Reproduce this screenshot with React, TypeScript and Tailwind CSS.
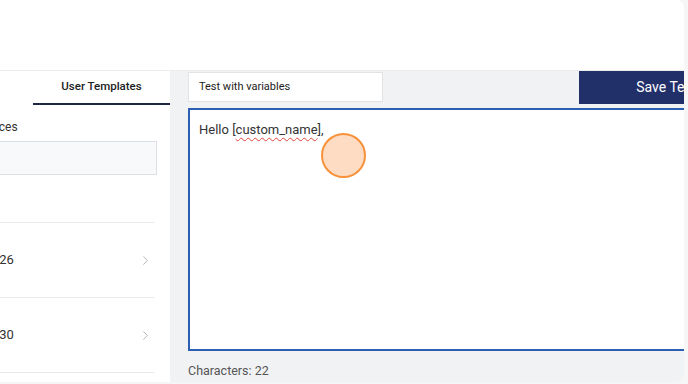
import React from 'react';
import { ChevronRight } from 'lucide-react';

const items = [
  { title: 'Template 05/26', sub: 'Hi there' },
  { title: 'Template 05/30', sub: 'Hi there' },
];

export default function App() {
  return (
    <div className="w-[688px] h-[384px] bg-[#f6f6f6] overflow-hidden font-['Roboto',sans-serif] text-[#333]">
      <div className="w-[684px] h-[382px] bg-white rounded-r-lg overflow-hidden flex flex-col relative">
        {/* Header */}
        <header className="h-[71px] shrink-0 bg-white border-b border-[#ececec]" />

        {/* Body */}
        <div className="flex flex-1 min-h-0 -ml-[102px]">
          {/* Left panel */}
          <aside className="w-[272px] shrink-0 bg-white flex flex-col">
            <div className="flex h-[34px]">
              <button className="w-[135px] text-[11.5px] text-[#555]">System</button>
              <button className="w-[137px] text-[11.5px] font-medium text-[#222] border-b-2 border-[#1d2746]">
                User Templates
              </button>
            </div>
            <div className="pl-4 pr-[13px] pt-[14px]">
              <p className="pl-[5px] text-[12px] text-[#333] leading-[16px]">Search Sequences</p>
              <input
                className="mt-[6px] w-full h-[34px] bg-[#f8f9fa] border border-[#dcdfe3] outline-none px-3"
                readOnly
              />
            </div>
            <ul className="mt-[47px] pl-4 pr-4">
              {items.map((it) => (
                <li key={it.title} className="h-[75px] border-t border-[#e9e9e9] pt-[28px]">
                  <div className="flex items-center justify-between">
                    <p className="pl-[8px] text-[13px] leading-[18px] text-[#333]">{it.title}</p>
                    <ChevronRight size={15} strokeWidth={1.2} className="text-[#9a9a9a] mr-[1px]" />
                  </div>
                  <p className="text-[10px] leading-[12px] text-[#888]">{it.sub}</p>
                </li>
              ))}
              <li className="border-t border-[#e9e9e9]" />
            </ul>
          </aside>

          {/* Right area */}
          <main className="w-[633px] shrink-0 bg-[#f1f2f4] px-[18px] flex flex-col">
            <div className="flex items-start justify-between h-[37px]">
              <div className="mt-[1px] w-[195px] h-[30px] bg-white border border-[#e2e3e5] flex items-center px-[10px] text-[11px] text-[#222]">
                Test with variables
              </div>
              <button className="w-[206px] h-[33px] bg-[#22306a] text-white text-[14px]">Save Template</button>
            </div>
            <div className="h-[243px] bg-white border-2 border-[#2c5fb3] px-[9px] pt-[10px] text-[13px] text-[#333]">
              Hello [<span className="underline decoration-wavy decoration-[#e0453a] decoration-1 underline-offset-[3px]">custom_name</span>],
            </div>
            <p className="mt-[11px] text-[12.5px] text-[#555]">Characters: 22</p>
          </main>
        </div>

        {/* click indicator */}
        <div className="absolute left-[321px] top-[133px] w-[45px] h-[45px] rounded-full bg-[#fedcc3] border-2 border-[#f7923a]" />
      </div>
    </div>
  );
}
